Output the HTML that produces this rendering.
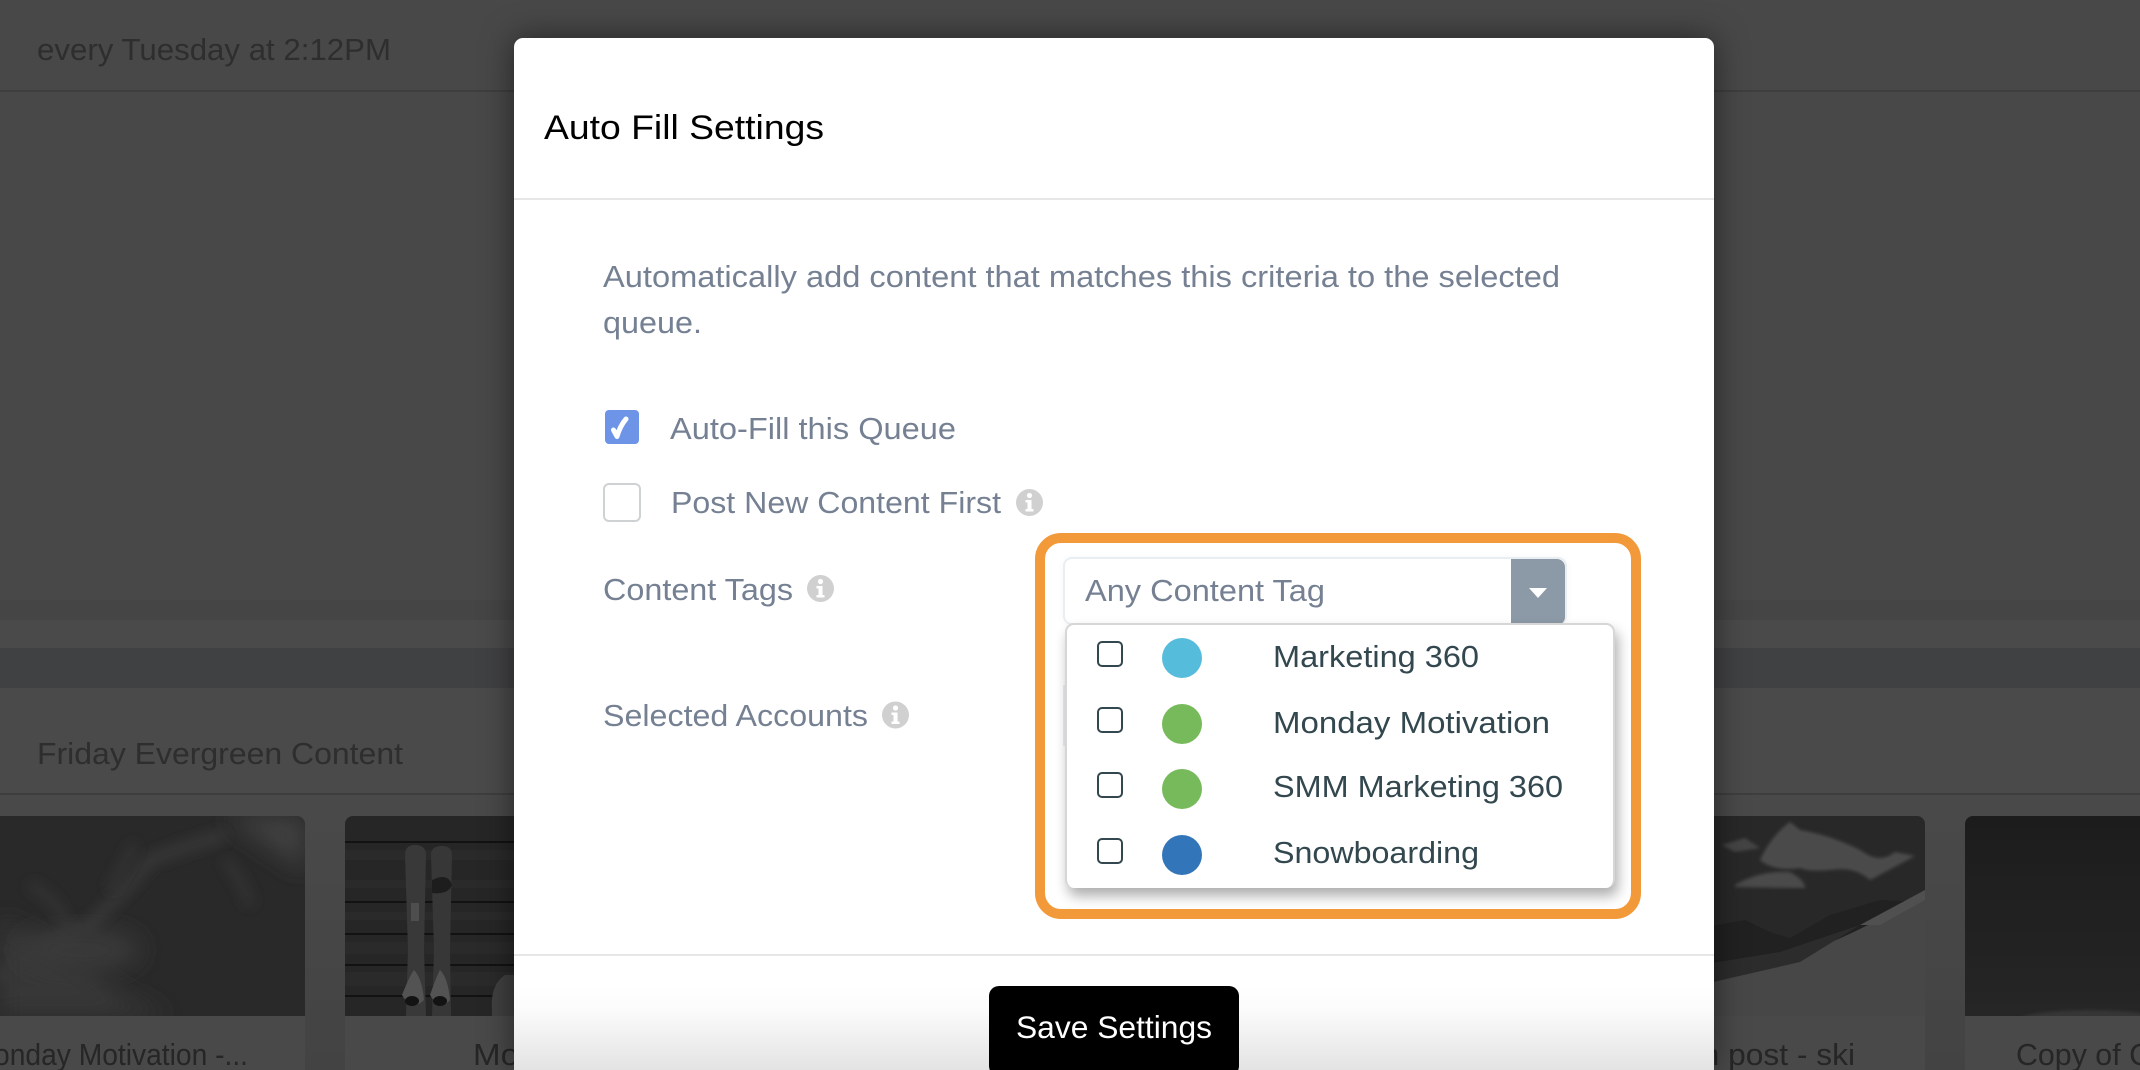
<!DOCTYPE html>
<html><head><meta charset="utf-8"><style>
html,body{margin:0;padding:0;width:2140px;height:1070px;overflow:hidden;background:#484848;}
#root{position:relative;width:2140px;height:1070px;overflow:hidden;}
#root div{position:absolute;box-sizing:border-box;}
svg{position:absolute;left:0;top:0;display:block;}
text{font-family:"Liberation Sans",sans-serif;}
</style></head><body><div id="root">
<svg width="2140" height="1070" viewBox="0 0 2140 1070">
<defs>
<filter id="b2"><feGaussianBlur stdDeviation="1.5"/></filter>
<filter id="b3" x="-20%" y="-20%" width="140%" height="140%"><feGaussianBlur stdDeviation="6"/></filter>
<filter id="b8" x="-30%" y="-30%" width="160%" height="160%"><feGaussianBlur stdDeviation="12"/></filter>
<clipPath id="c1"><path d="M0 816H297a8 8 0 0 1 8 8V1016H0Z"/></clipPath>
<clipPath id="c2"><path d="M353 816H520V1016H345V824a8 8 0 0 1 8-8Z"/></clipPath>
<clipPath id="c3"><path d="M1700 816H1917a8 8 0 0 1 8 8V1016H1700Z"/></clipPath>
<clipPath id="c4"><path d="M1973 816H2140V1016H1965V824a8 8 0 0 1 8-8Z"/></clipPath>
<linearGradient id="dk" x1="0" y1="0" x2="0" y2="1"><stop offset="0" stop-color="#212121"/><stop offset="1" stop-color="#2c2c2c"/></linearGradient>
<linearGradient id="gut" x1="0" y1="0" x2="0" y2="1"><stop offset="0" stop-color="#545454"/><stop offset="1" stop-color="#4e4e4e"/></linearGradient>
</defs>
<rect width="2140" height="1070" fill="#555"/>
<rect y="0" width="2140" height="620" fill="#535353"/>
<rect y="90" width="2140" height="2" fill="#484848"/>
<rect y="600" width="2140" height="20" fill="#505050"/>
<rect y="620" width="2140" height="28" fill="#555"/>
<rect y="648" width="2140" height="40" fill="#4a4b4d"/>
<rect y="793" width="2140" height="2" fill="#484848"/>
<rect y="795" width="2140" height="275" fill="#545454"/>
<rect x="305" y="816" width="40" height="254" fill="url(#gut)"/>
<rect x="1925" y="816" width="40" height="254" fill="url(#gut)"/>

<g clip-path="url(#c1)">
<rect x="0" y="816" width="305" height="200" fill="#303030"/>
<path d="M225 816L305 816L305 870Z" fill="#4c4c4c" filter="url(#b8)"/>
<path d="M0 980Q40 945 90 925Q130 885 150 860Q190 845 225 835" stroke="#434343" stroke-width="10" fill="none" filter="url(#b3)"/>
<path d="M30 885Q70 905 75 960M110 890L135 845M225 860Q245 885 250 905" stroke="#3b3b3b" stroke-width="9" fill="none" filter="url(#b3)"/>
<path d="M0 920Q60 950 130 1000L170 1016L0 1016Z" fill="#3f3f3f" filter="url(#b8)"/>
<ellipse cx="80" cy="950" rx="60" ry="22" fill="#434343" filter="url(#b8)"/>
</g>

<g clip-path="url(#c2)">
<rect x="345" y="816" width="170" height="200" fill="#2c2c2c"/>
<g fill="#313131">
<rect x="345" y="850" width="170" height="10"/>
<rect x="345" y="880" width="170" height="8"/>
<rect x="345" y="912" width="170" height="8"/>
<rect x="345" y="942" width="170" height="12"/>
<rect x="345" y="972" width="170" height="14"/>
</g>
<g fill="#151515">
<rect x="345" y="841" width="170" height="2"/>
<rect x="345" y="901" width="170" height="2"/>
<rect x="345" y="933" width="170" height="2"/>
<rect x="345" y="964" width="170" height="2"/>
<rect x="345" y="995" width="170" height="2"/>
</g>
<path d="M405 855Q405 845 415 845Q426 845 426 855L424 950L426 1016H406L408 950Z" fill="#424242"/>
<path d="M431 855Q431 846 442 846Q452 846 452 855L450 950L451 1016H432L434 950Z" fill="#404040"/>
<path d="M432 880Q448 872 452 885Q448 895 432 893Z" fill="#222"/>
<rect x="411" y="903" width="8" height="18" fill="#5a5a5a"/>
<path d="M402 995Q410 975 414 970Q422 978 424 1000Q412 1012 402 995Z" fill="#606060"/>
<path d="M430 995Q437 975 440 970Q448 978 450 1000Q440 1012 430 995Z" fill="#606060"/>
<ellipse cx="412" cy="1001" rx="7" ry="5" fill="#161616"/>
<ellipse cx="440" cy="1001" rx="7" ry="5" fill="#161616"/>
<path d="M492 1010Q490 985 505 975L515 975V1016H492Z" fill="#4a4a4a"/>
</g>

<g clip-path="url(#c3)">
<rect x="1700" y="816" width="225" height="200" fill="#2f2f2f"/>
<path d="M1760 860Q1772 835 1790 822L1800 830Q1830 835 1860 850Q1880 865 1895 852L1915 856L1885 872L1870 880Q1855 866 1830 870Q1810 872 1800 868Q1775 872 1760 860Z" fill="#575757" filter="url(#b2)"/>
<path d="M1735 885Q1760 870 1790 872Q1805 880 1805 888Q1780 888 1735 887Z" fill="#545454" filter="url(#b2)"/>
<path d="M1722 845L1745 838L1760 848L1735 852Z" fill="#505050" filter="url(#b2)"/>
<path d="M1700 928L1745 920L1770 932L1790 938L1830 915L1880 900L1925 902V1016H1700Z" fill="#272727"/>
<path d="M1700 975Q1800 970 1925 893V1016H1700Z" fill="#525252"/>
<path d="M1700 965L1780 952L1860 925L1800 962L1700 985Z" fill="#333"/>
<path d="M1860 925L1925 890V900L1880 925Z" fill="#5c5c5c"/>
</g>

<g clip-path="url(#c4)">
<rect x="1965" y="816" width="175" height="200" fill="url(#dk)"/>
<ellipse cx="2090" cy="1020" rx="70" ry="10" fill="#3e3e3e" filter="url(#b2)"/>
</g>

<g fill="#353535" font-size="31">
<text x="37" y="60" textLength="354" lengthAdjust="spacingAndGlyphs">every Tuesday at 2:12PM</text>
<text x="37" y="764" textLength="366" lengthAdjust="spacingAndGlyphs">Friday Evergreen Content</text>
</g>
<g fill="#2c2c2c" font-size="31">
<text x="-6" y="1065" textLength="254" lengthAdjust="spacingAndGlyphs">onday Motivation -...</text>
<text x="473" y="1065" textLength="46" lengthAdjust="spacingAndGlyphs">Mo</text>
<text x="1684" y="1065" textLength="171" lengthAdjust="spacingAndGlyphs">on post - ski</text>
<text x="2016" y="1065" textLength="135" lengthAdjust="spacingAndGlyphs">Copy of C</text>
</g>
<rect width="2140" height="1070" fill="#000" opacity=".13"/>
</svg>

<div style="left:514px;top:38px;width:1200px;height:1032px;background:#fff;border-radius:9px 9px 0 0;box-shadow:0 0 32px rgba(0,0,0,.5);"></div>
<div style="left:514px;top:985px;width:1200px;height:85px;background:linear-gradient(#fff,#fbfbfb 30%,#e3e3e3);"></div>
<div style="left:514px;top:198px;width:1200px;height:2px;background:#e6e6e6;"></div>
<div style="left:514px;top:954px;width:1200px;height:2px;background:#e6e6e6;"></div>

<div style="left:1035px;top:533px;width:606px;height:386px;border:10px solid #f2993a;border-radius:26px;"></div>
<div style="left:1063px;top:557px;width:504px;height:68px;background:#fff;border:2px solid #e9eef3;border-radius:9px;box-shadow:0 1px 8px rgba(0,0,0,.04);"></div>
<div style="left:1511px;top:559px;width:54px;height:66px;background:#8c99a6;border-radius:0 8px 8px 0;"></div>
<div style="left:1063px;top:685px;width:3px;height:61px;background:#eceef1;"></div>
<div style="left:1065px;top:623px;width:550px;height:265px;background:#fff;border:2px solid #d6d6d6;border-bottom:none;border-radius:9px;box-shadow:3px 8px 13px rgba(0,0,0,.32);"></div>

<div style="left:605px;top:410px;width:34px;height:34px;background:#6e94e8;border-radius:4px;"></div>
<div style="left:603px;top:483px;width:38px;height:39px;background:#fff;border:2px solid #cfd2d2;border-radius:6px;"></div>

<div style="left:1097px;top:641px;width:26px;height:26px;border:2px solid #33474f;border-radius:5px;"></div>
<div style="left:1097px;top:707px;width:26px;height:26px;border:2px solid #33474f;border-radius:5px;"></div>
<div style="left:1097px;top:772px;width:26px;height:26px;border:2px solid #33474f;border-radius:5px;"></div>
<div style="left:1097px;top:838px;width:26px;height:26px;border:2px solid #33474f;border-radius:5px;"></div>
<div style="left:1162px;top:638px;width:40px;height:40px;border-radius:50%;background:#56bcdc;"></div>
<div style="left:1162px;top:704px;width:40px;height:40px;border-radius:50%;background:#77ba5c;"></div>
<div style="left:1162px;top:769px;width:40px;height:40px;border-radius:50%;background:#77ba5c;"></div>
<div style="left:1162px;top:835px;width:40px;height:40px;border-radius:50%;background:#3375b9;"></div>

<div style="left:989px;top:986px;width:250px;height:90px;background:#000;border-radius:10px;"></div>

<svg width="2140" height="1070" viewBox="0 0 2140 1070">
<path d="M613.5 430L617 436.5Q620 426 626 419" fill="none" stroke="#fff" stroke-width="5" stroke-linecap="round" stroke-linejoin="round"/>
<path d="M1529 588H1547L1538 598Z" fill="#fff"/>

<g fill="#d0d0d0">
<circle cx="1029.5" cy="502.5" r="13.5"/><g fill="#fff"><circle cx="1029.5" cy="495.5" r="2.6"/><path d="M1025.5 500h6v9h2v2.5h-8V509h2v-6.5h-2z"/></g>
<circle cx="820.5" cy="588.5" r="13.5"/><g fill="#fff"><circle cx="820.5" cy="581.5" r="2.6"/><path d="M816.5 586h6v9h2v2.5h-8V595h2v-6.5h-2z"/></g>
<circle cx="895.5" cy="715" r="13.5"/><g fill="#fff"><circle cx="895.5" cy="708" r="2.6"/><path d="M891.5 712.5h6v9h2v2.5h-8v-2.5h2V715h-2z"/></g>
</g>

<text x="544" y="139" font-size="34" fill="#000" textLength="280" lengthAdjust="spacingAndGlyphs">Auto Fill Settings</text>
<g fill="#758193" font-size="31">
<text x="603" y="287" textLength="957" lengthAdjust="spacingAndGlyphs">Automatically add content that matches this criteria to the selected</text>
<text x="603" y="333" textLength="99" lengthAdjust="spacingAndGlyphs">queue.</text>
<text x="670" y="439" textLength="286" lengthAdjust="spacingAndGlyphs">Auto-Fill this Queue</text>
<text x="671" y="513" textLength="330" lengthAdjust="spacingAndGlyphs">Post New Content First</text>
<text x="603" y="600" textLength="190" lengthAdjust="spacingAndGlyphs">Content Tags</text>
<text x="603" y="726" textLength="265" lengthAdjust="spacingAndGlyphs">Selected Accounts</text>
<text x="1085" y="601" textLength="240" lengthAdjust="spacingAndGlyphs">Any Content Tag</text>
</g>
<g fill="#33474f" font-size="31">
<text x="1273" y="667" textLength="206" lengthAdjust="spacingAndGlyphs">Marketing 360</text>
<text x="1273" y="733" textLength="277" lengthAdjust="spacingAndGlyphs">Monday Motivation</text>
<text x="1273" y="797" textLength="290" lengthAdjust="spacingAndGlyphs">SMM Marketing 360</text>
<text x="1273" y="863" textLength="206" lengthAdjust="spacingAndGlyphs">Snowboarding</text>
</g>
<text x="1016" y="1038" font-size="31.5" fill="#fff" textLength="196" lengthAdjust="spacingAndGlyphs">Save Settings</text>
</svg>
</div></body></html>
